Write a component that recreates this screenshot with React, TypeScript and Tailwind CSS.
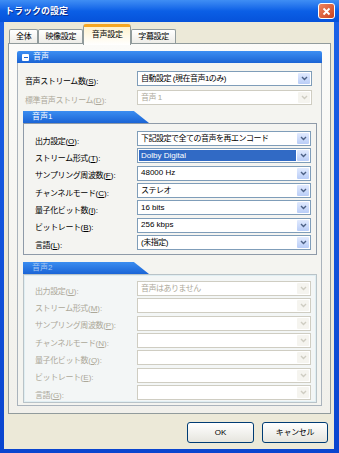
import React from 'react';

const FONT = "font-['Liberation_Sans','Noto_Sans_CJK_JP',sans-serif]";

type ComboProps = {
  value?: string;
  disabled?: boolean;
  selected?: boolean;
  width: string;
};

function Combo({ value = '', disabled, selected, width }: ComboProps) {
  const cjk = /[^\x00-\x7f]/.test(value);
  return (
    <div
      className={`flex h-[15px] ${width} items-center border p-[1px] bg-white ${
        disabled ? 'border-[#cfcdc2]' : 'border-[#7f9db9]'
      }`}
    >
      <div
        className={`flex h-full flex-1 items-center px-[2px] text-[8px] leading-none whitespace-nowrap ${
          cjk ? 'tracking-[-0.5px]' : ''
        } ${selected ? 'bg-[#316ac5] text-white' : disabled ? 'text-[#aca899]' : 'text-black'}`}
      >
        {value}
      </div>
      <div
        className={`ml-[1px] flex h-full w-[12px] items-center justify-center rounded-[1px] ${
          disabled ? 'bg-[#f5f4ef]' : 'bg-gradient-to-b from-[#e1eafe] to-[#b9cdf7]'
        }`}
      >
        <svg width="7" height="5" viewBox="0 0 7 5">
          <path
            d="M1 1l2.5 2.5L6 1"
            stroke={disabled ? '#cfcdc2' : '#4d6185'}
            strokeWidth="1.4"
            fill="none"
          />
        </svg>
      </div>
    </div>
  );
}

function Label({ text, k, disabled }: { text: string; k: string; disabled?: boolean }) {
  return (
    <span
      className={`text-[8px] leading-none whitespace-nowrap ${disabled ? 'text-[#aca899]' : 'text-black'}`}
    >
      <span className="tracking-[-0.4px]">{text}</span>(<span className="underline">{k}</span>):
    </span>
  );
}

type Row = { label: string; k: string; value?: string; selected?: boolean };

const audio1: Row[] = [
  { label: '出力設定', k: 'O', value: '下記設定で全ての音声を再エンコード' },
  { label: 'ストリーム形式', k: 'T', value: 'Dolby Digital', selected: true },
  { label: 'サンプリング周波数', k: 'F', value: '48000 Hz' },
  { label: 'チャンネルモード', k: 'C', value: 'ステレオ' },
  { label: '量子化ビット数', k: 'I', value: '16 bits' },
  { label: 'ビットレート', k: 'B', value: '256 kbps' },
  { label: '言語', k: 'L', value: '(未指定)' },
];

const audio2: Row[] = [
  { label: '出力設定', k: 'U', value: '音声はありません' },
  { label: 'ストリーム形式', k: 'M' },
  { label: 'サンプリング周波数', k: 'P' },
  { label: 'チャンネルモード', k: 'N' },
  { label: '量子化ビット数', k: 'Q' },
  { label: 'ビットレート', k: 'E' },
  { label: '言語', k: 'G' },
];

function SubGroup({ title, rows, disabled }: { title: string; rows: Row[]; disabled?: boolean }) {
  return (
    <div className="ml-[5px] w-[294px]">
      <div className="flex h-[12px] w-[126px] items-center bg-gradient-to-b from-[#3b8df0] to-[#1a64d6] pl-[9px] [clip-path:polygon(0_0,88%_0,100%_100%,0_100%)]">
        <span className={`text-[8px] leading-none ${disabled ? 'text-[#a9c9f2]' : 'text-white'}`}>{title}</span>
      </div>
      <div
        className={`flex flex-col gap-[2.35px] border ${
          disabled
            ? 'border-[#b9c3c8] bg-[#f3f6f6] pt-[6px] pb-[2px] shadow-[inset_0_0_0_1px_#e0eef2]'
            : 'border-[#8e9aa8] bg-[#f4f4f1] pt-[7px] pb-[4px]'
        }`}
      >
        {rows.map((r) => (
          <div key={r.label} className="flex h-[15px] items-center">
            <div className="w-[113px] pl-[11px]">
              <Label text={r.label} k={r.k} disabled={disabled} />
            </div>
            <Combo value={r.value} selected={r.selected} disabled={disabled} width="w-[174px]" />
          </div>
        ))}
      </div>
    </div>
  );
}

function Tab({ label, active }: { label: string; active?: boolean }) {
  if (active) {
    return (
      <div className="relative z-10 -mb-[1px] flex h-[21px] w-[48px] items-center justify-center rounded-t-[3px] border-x border-t-[3px] border-[#919b9c] border-t-[#f5a623] bg-gradient-to-b from-[#fff3d0] to-white pb-[2px]">
        <span className="text-[8px] leading-none tracking-[-0.3px] text-black">{label}</span>
      </div>
    );
  }
  return (
    <div className="flex h-[15px] items-center justify-center rounded-t-[2px] border border-b-0 border-[#919b9c] bg-gradient-to-b from-white to-[#ecebe6] px-[6px]">
      <span className="text-[8px] leading-none tracking-[-0.3px] text-black">{label}</span>
    </div>
  );
}

export default function App() {
  return (
    <div className={`flex h-[453px] w-[339px] flex-col bg-gradient-to-b from-[#1c63e8] to-[#0a45cf] ${FONT}`}>
      {/* Title bar */}
      <div className="flex h-[22px] items-center justify-between bg-gradient-to-b from-[#3f8ef4] via-[#0b5fe6] to-[#0652da] pl-[5px] pr-[4px]">
        <span className="text-[9px] font-bold leading-none text-white [text-shadow:1px_1px_0_#0a2a8a]">トラックの設定</span>
        <div className="flex h-[16px] w-[17px] items-center justify-center rounded-[3px] border border-white bg-gradient-to-br from-[#f0845f] to-[#c9401c]">
          <svg width="9" height="9" viewBox="0 0 9 9">
            <path d="M1.5 1.5l6 6M7.5 1.5l-6 6" stroke="white" strokeWidth="1.8" />
          </svg>
        </div>
      </div>

      {/* Body */}
      <div className="ml-[4px] flex h-[427px] w-[330px] flex-col bg-[#ece9d8]">
        {/* Tabs */}
        <div className="flex h-[22px] items-end pl-[5px]">
          <Tab label="全体" />
          <Tab label="映像設定" />
          <Tab label="音声設定" active />
          <Tab label="字幕設定" />
        </div>

        {/* Panel */}
        <div className="-mt-[1px] ml-[4px] flex h-[371px] w-[323px] flex-col border border-[#919b9c] bg-gradient-to-b from-[#fbfbf9] to-[#f1f0eb] pt-[7px]">
          <div className="ml-[8px] w-[305px]">
            <div className="flex h-[12px] items-center gap-[4px] rounded-t-[2px] bg-gradient-to-b from-[#3d8ff2] to-[#1b64d4] pl-[5px]">
              <div className="flex h-[7px] w-[7px] items-center justify-center rounded-[1px] bg-white">
                <div className="h-[1px] w-[4px] bg-[#1b64d4]" />
              </div>
              <span className="text-[8px] leading-none text-white">音声</span>
            </div>
            <div className="h-[343px] border border-t-0 border-[#aab3bc] bg-[#f4f4f0] pt-[8px]">
              <div className="flex flex-col gap-[4px]">
                <div className="flex h-[15px] items-center">
                  <div className="w-[119px] pl-[7px]">
                    <Label text="音声ストリーム数" k="S" />
                  </div>
                  <Combo value="自動設定 (現在音声1のみ)" width="w-[175px]" />
                </div>
                <div className="flex h-[15px] items-center">
                  <div className="w-[119px] pl-[7px]">
                    <Label text="標準音声ストリーム" k="D" disabled />
                  </div>
                  <Combo value="音声 1" disabled width="w-[175px]" />
                </div>
              </div>
              <div className="mt-[6px]">
                <SubGroup title="音声1" rows={audio1} />
              </div>
              <div className="mt-[7px]">
                <SubGroup title="音声2" rows={audio2} disabled />
              </div>
            </div>
          </div>
        </div>

        {/* Buttons */}
        <div className="mt-[8px] flex justify-end gap-[8px] pr-[6px]">
          <button className="flex h-[21px] w-[67px] items-center justify-center rounded-[3px] border border-[#003c74] bg-gradient-to-b from-white to-[#e6e5de] text-[8px] text-black">
            OK
          </button>
          <button className="flex h-[21px] w-[66px] items-center justify-center rounded-[3px] border border-[#003c74] bg-gradient-to-b from-white to-[#e6e5de] text-[8px] tracking-[-0.3px] text-black">
            キャンセル
          </button>
        </div>
      </div>
    </div>
  );
}
